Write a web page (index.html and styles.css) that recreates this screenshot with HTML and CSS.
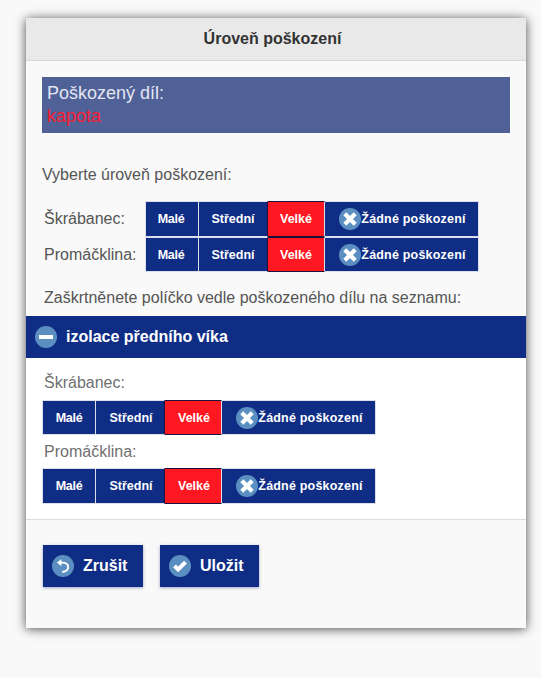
FILE: index.html
```html
<!DOCTYPE html>
<html lang="cs">
<head>
    <meta charset="UTF-8">
    <meta name="viewport" content="width=device-width, initial-scale=1.0">
    <title>Úroveň poškození</title>
    <link rel="stylesheet" href="styles.css">
</head>
<body>
    <!-- Shared icons -->
    <svg class="icon-defs" width="0" height="0">
        <symbol id="icon-delete" viewBox="0 0 22 22">
            <circle cx="11" cy="11" r="11"/>
            <path d="M5.8 5.8l10.4 10.4M16.2 5.8L5.8 16.2" stroke-width="4.2"/>
        </symbol>
        <symbol id="icon-minus" viewBox="0 0 22 22">
            <circle cx="11" cy="11" r="11"/>
            <path d="M4 11h14" stroke-width="4"/>
        </symbol>
        <symbol id="icon-back" viewBox="0 0 22 22">
            <circle cx="11" cy="11" r="11"/>
            <path d="M8 7.6h2.2c3.6 0 6 1.8 6 4.6 0 2.6-2.4 4.3-6 4.8" stroke-width="1.9"/>
            <path class="solid" d="M9.4 4.2v7L5 7.6z"/>
        </symbol>
        <symbol id="icon-check" viewBox="0 0 22 22">
            <circle cx="11" cy="11" r="11"/>
            <path d="M5.5 10.9l3.6 3.6 7.4-7.4" stroke-width="4"/>
        </symbol>
    </svg>

    <div class="dialog">
        <div class="header">
            <h1>Úroveň poškození</h1>
        </div>

        <div class="content">
            <div class="damaged-part">
                <p>Poškozený díl:</p>
                <p class="part-name">kapota</p>
            </div>

            <p class="intro">Vyberte úroveň poškození:</p>

            <div class="level-row">
                <span class="level-label">Škrábanec:</span>
                <div class="controlgroup">
                    <button class="btn small">Malé</button>
                    <button class="btn medium">Střední</button>
                    <button class="btn large active">Velké</button>
                    <button class="btn none"><svg class="icon"><use href="#icon-delete"/></svg>Žádné poškození</button>
                </div>
            </div>
            <div class="level-row">
                <span class="level-label">Promáčklina:</span>
                <div class="controlgroup short">
                    <button class="btn small">Malé</button>
                    <button class="btn medium">Střední</button>
                    <button class="btn large active">Velké</button>
                    <button class="btn none"><svg class="icon"><use href="#icon-delete"/></svg>Žádné poškození</button>
                </div>
            </div>

            <p class="list-hint">Zaškrtněnete políčko vedle poškozeného dílu na seznamu:</p>
        </div>

        <div class="collapsible">
            <h2 class="collapsible-heading"><svg class="icon"><use href="#icon-minus"/></svg><span>izolace předního víka</span></h2>
            <div class="collapsible-content">
                <p>Škrábanec:</p>
                <div class="controlgroup short">
                    <button class="btn small">Malé</button>
                    <button class="btn medium">Střední</button>
                    <button class="btn large active">Velké</button>
                    <button class="btn none"><svg class="icon"><use href="#icon-delete"/></svg>Žádné poškození</button>
                </div>
                <p>Promáčklina:</p>
                <div class="controlgroup">
                    <button class="btn small">Malé</button>
                    <button class="btn medium">Střední</button>
                    <button class="btn large active">Velké</button>
                    <button class="btn none"><svg class="icon"><use href="#icon-delete"/></svg>Žádné poškození</button>
                </div>
            </div>
        </div>

        <div class="actions">
            <button class="action cancel"><svg class="icon"><use href="#icon-back"/></svg><span>Zrušit</span></button>
            <button class="action save"><svg class="icon"><use href="#icon-check"/></svg><span>Uložit</span></button>
        </div>
    </div>
</body>
</html>
```
FILE: styles.css
```css
* {
    margin: 0;
    padding: 0;
    box-sizing: border-box;
}

body {
    min-height: 100vh;
    padding: 18px 15px 0 26px;
    font-family: "Liberation Sans", Arial, sans-serif;
    font-size: 16px;
    line-height: 20px;
    color: #555;
    background-color: #f9f9f9;
}

button {
    font-family: inherit;
    color: white;
    background-color: #0f2d85;
    border: none;
    border-radius: 0;
    cursor: pointer;
}

.icon-defs {
    position: absolute;
}

.icon {
    flex: none;
    width: 22px;
    height: 22px;
    fill: none;
    stroke: white;
}

.icon-defs circle {
    fill: #5c8fc1;
    stroke: none;
}

.icon-defs .solid {
    fill: white;
    stroke: none;
}

.dialog {
    width: 500px;
    height: 610px;
    background-color: #f9f9f9;
    box-shadow: 0 1px 10px rgba(0, 0, 0, 0.7);
}

.header {
    height: 43px;
    padding-top: 11px;
    text-align: center;
    background-color: #e9e9e9;
    border-bottom: 1px solid #d6d6d6;
}

.header h1 {
    padding-right: 7px;
    font-size: 16px;
    line-height: 20px;
    color: #333;
}

.content {
    height: 255px;
    padding: 16px 16px 0;
}

.damaged-part {
    height: 56px;
    padding: 5px;
    font-size: 18px;
    line-height: 23px;
    color: #e3e6f2;
    background-color: #506197;
}

.damaged-part .part-name {
    color: #f91d30;
}

.intro {
    margin: 32px 0 16px;
}

.level-row {
    display: flex;
    padding-left: 2px;
}

.level-label {
    width: 101px;
    padding-top: 8px;
}

/* Segmented damage level buttons */
.controlgroup {
    display: flex;
    height: 36px;
}

.controlgroup.short {
    height: 35px;
}

.btn {
    display: flex;
    align-items: center;
    justify-content: center;
    font-size: 12.5px;
    font-weight: bold;
    border: 1px solid #dcdfea;
    border-left: none;
}

.btn.small {
    width: 54px;
    padding-right: 2px;
    letter-spacing: -0.3px;
    border-left: 1px solid #dcdfea;
}

.btn.medium {
    width: 69px;
    border-right-color: #1a123d;
}

.btn.large {
    width: 57px;
}

.btn.none {
    width: 154px;
    padding-left: 2px;
    letter-spacing: 0.2px;
}

.btn.active {
    background-color: #ff1822;
    border-color: #1a123d #dcdfea #1a123d #1a123d;
}

.collapsible .btn.small,
.collapsible .btn.medium,
.collapsible .btn.large {
    padding-left: 2px;
}

.list-hint {
    margin: 16px 0 0 2px;
}

.collapsible-heading {
    display: flex;
    align-items: center;
    gap: 9px;
    height: 42px;
    padding-left: 9px;
    font-size: 16px;
    color: white;
    background-color: #0f2d85;
}

.collapsible-content {
    height: 162px;
    padding: 15px 16px 0;
    color: #707070;
    background-color: white;
    border-bottom: 1px solid #ddd;
}

.collapsible-content p {
    margin: 0 0 7px 2px;
}

.collapsible-content .controlgroup + p {
    margin: 7px 0 6px 2px;
}

.actions {
    display: flex;
    gap: 17px;
    padding: 25px 17px;
}

.action {
    display: flex;
    align-items: center;
    gap: 9px;
    height: 42px;
    padding-left: 9px;
    font-size: 16px;
    font-weight: bold;
    box-shadow: 0 1px 3px rgba(15, 45, 133, 0.4);
}

.action.cancel {
    width: 100px;
}

.action.save {
    width: 99px;
}
```
